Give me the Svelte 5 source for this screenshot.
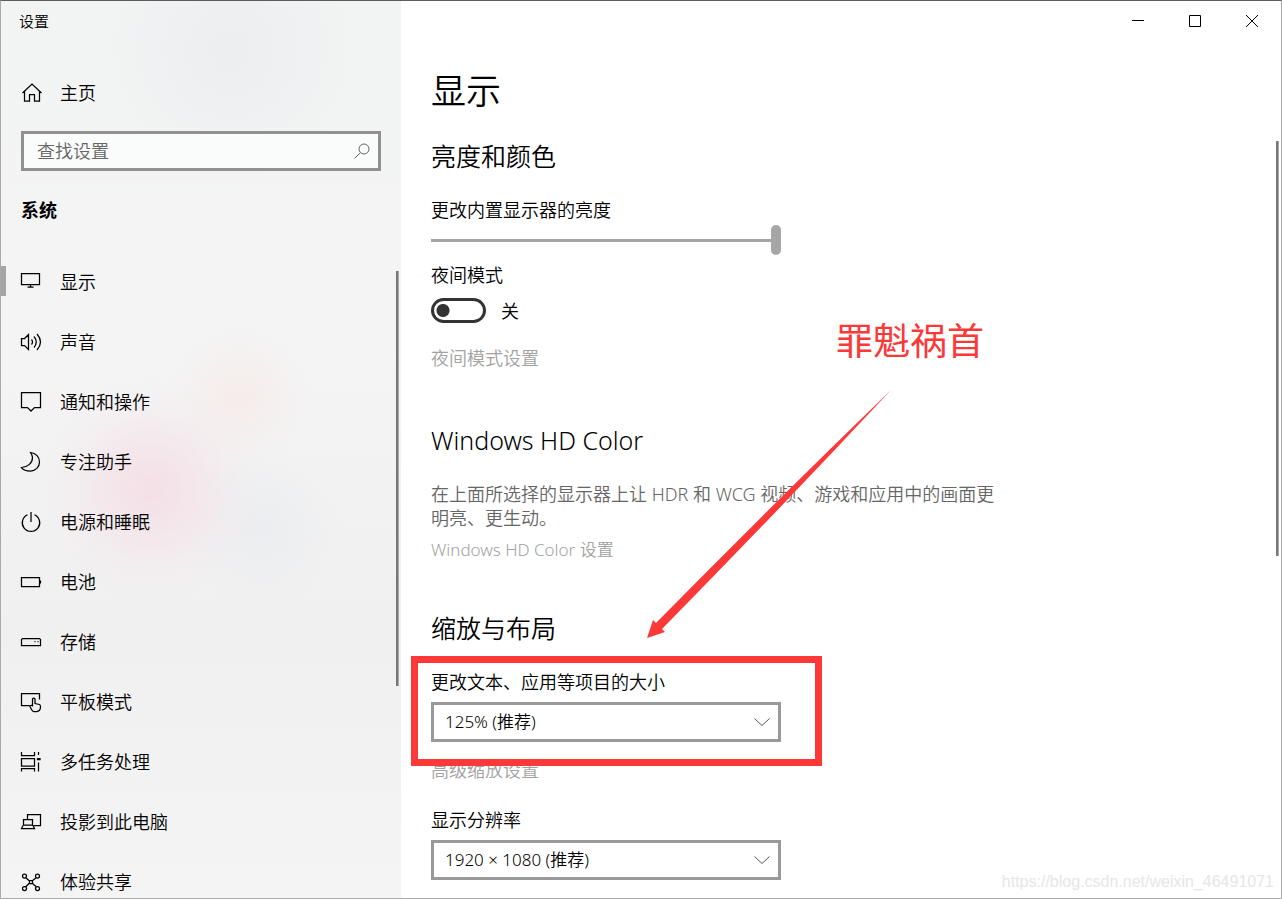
<script lang="ts">
  type NavItem = { label: string; icon: string };

  const items: NavItem[] = [
    { label: "显示", icon: "M1.5 2.5h18v11h-18zM10.5 13.5v2.5M7.5 16h6" },
    {
      label: "声音",
      icon: "M1.5 7.5h3l4-4v15l-4-4h-3zM11.5 8.5q2 2.5 0 5M14 5.5q4.5 5.5 0 11M17 3q7 8 0 16"
    },
    { label: "通知和操作", icon: "M1.5 1.5h19v15h-6l-3.5 3.5-3.5-3.5h-6z" },
    {
      label: "专注助手",
      icon: "M10.5 1.5C16 2 19.5 6 19.5 11C19.5 16 15.5 20 10.5 20C6.5 20 3 18.5 1.5 16.5C8 16 12.5 12 12.5 6.5C12.5 4.5 11.5 3 10.5 1.5z"
    },
    { label: "电源和睡眠", icon: "M11 1v10M7.5 3.8a8.7 8.7 0 1 0 7 0" },
    { label: "电池", icon: "M1.5 6.5h18v9h-18zM20.5 9.5v3" },
    { label: "存储", icon: "M2.5 7.5h17l1 1v6h-19v-6zM14.5 10.5h1M17.5 10.5h1" },
    {
      label: "平板模式",
      icon: "M9.5 14.5h-8v-12h18v6M12.5 15.5v-7.5q1-2 2.5 0v4.5l4.5 1q1 .5 1 2c0 3-1.5 5-4 5h-2.5q-1.5 0-2.5-2l-1.5-3q0-1.5 2.5-1"
    },
    {
      label: "多任务处理",
      icon: "M1.5 1v3.5h13v-3.5M1.5 7.5h13v7.5h-13zM1.5 20.5v-3h13v3M18.5 1v3M18.5 11.5v9M18 8h1M18.5 7v2M17.5 7.5h2.5v1h-2.5z"
    },
    {
      label: "投影到此电脑",
      icon: "M7.5 8v-4.5h13v11h-7M3.5 14v-5.5h9v5.5zM3 14.5l-1.5 3h13l-1.5-3"
    },
    {
      label: "体验共享",
      icon: "M5.5 6.5l4 3.5M12 10l4.5-3.5M5.5 16l4-4M12 12l4.5 4M9.5 9.5h3v3h-3zM2.5 5a2 2 0 1 0 4 0a2 2 0 1 0-4 0M15.5 5a2 2 0 1 0 4 0a2 2 0 1 0-4 0M2.5 17.5a2 2 0 1 0 4 0a2 2 0 1 0-4 0M15.5 17.5a2 2 0 1 0 4 0a2 2 0 1 0-4 0"
    }
  ];

  let selected = $state("显示");
  let nightMode = $state(false);
  let scale = $state("125% (推荐)");
  let resolution = $state("1920 × 1080 (推荐)");
</script>

<div class="window">
  <aside class="sidebar">
    <div class="app-title">设置</div>
    <a class="nav-link home" href="#home">
      <svg class="icon" viewBox="0 0 22 22"><path d="M2.5 11L12 2l9.5 9M4.5 9.5v9.5h5v-6.5h5v6.5h5v-9.5" /></svg>
      主页
    </a>
    <div class="search">
      <input class="search-input" type="search" placeholder="查找设置" aria-label="查找设置" />
      <svg class="search-icon" viewBox="0 0 16 16"><circle cx="10" cy="6" r="5" /><path d="M6.5 9.5L.5 15.5" /></svg>
    </div>
    <h2 class="group">系统</h2>
    <nav class="nav">
      {#each items as item}
        <a
          class="nav-link"
          class:active={selected === item.label}
          href="#{item.label}"
          onclick={() => (selected = item.label)}
        >
          <svg class="icon" viewBox="0 0 22 22"><path d={item.icon} /></svg>
          {item.label}
        </a>
      {/each}
    </nav>
    <div class="scrollbar side-scroll"></div>
  </aside>

  <main class="main">
    <div class="caption">
      <button class="caption-button" aria-label="最小化">
        <svg viewBox="0 0 12 12"><path d="M0 5.5h12" /></svg>
      </button>
      <button class="caption-button" aria-label="最大化">
        <svg viewBox="0 0 12 12"><path d="M.5 .5h11v11h-11z" /></svg>
      </button>
      <button class="caption-button" aria-label="关闭">
        <svg viewBox="0 0 12 12"><path d="M0 0l12 12M12 0l-12 12" /></svg>
      </button>
    </div>

    <div class="content">
      <h1>显示</h1>

      <section>
        <h2>亮度和颜色</h2>
        <label class="label" for="brightness">更改内置显示器的亮度</label>
        <input id="brightness" class="slider" type="range" min="0" max="100" value="100" disabled />
        <div class="label">夜间模式</div>
        <label class="toggle-row">
          <input class="toggle" type="checkbox" role="switch" bind:checked={nightMode} />
          {nightMode ? "开" : "关"}
        </label>
        <a class="link night-link" href="#night">夜间模式设置</a>
      </section>

      <section>
        <h2>Windows HD Color</h2>
        <p class="description">在上面所选择的显示器上让 HDR 和 WCG 视频、游戏和应用中的画面更明亮、更生动。</p>
        <a class="link color-link" href="#hdcolor">Windows HD Color 设置</a>
      </section>

      <section>
        <h2>缩放与布局</h2>
        <div class="field marked">
          <label class="label" for="scale">更改文本、应用等项目的大小</label>
          <div class="select">
            <select id="scale" bind:value={scale}>
              <option>100%</option>
              <option>125% (推荐)</option>
              <option>150%</option>
            </select>
            <svg class="chevron" viewBox="0 0 16 8"><path d="M.5 .5l7.5 7 7.5-7" /></svg>
          </div>
          <svg class="arrow" viewBox="0 0 244 248">
            <path d="M0 248L6 230L9 233Q130 110 244 0Q134 118 15 239L18 242z" />
          </svg>
          <div class="note">罪魁祸首</div>
        </div>
        <a class="link scale-link" href="#scaling">高级缩放设置</a>
        <div class="field">
          <label class="label" for="resolution">显示分辨率</label>
          <div class="select">
            <select id="resolution" bind:value={resolution}>
              <option>1920 × 1080 (推荐)</option>
              <option>1600 × 900</option>
              <option>1280 × 720</option>
            </select>
            <svg class="chevron" viewBox="0 0 16 8"><path d="M.5 .5l7.5 7 7.5-7" /></svg>
          </div>
        </div>
      </section>
    </div>
    <div class="scrollbar main-scroll"></div>
    <div class="watermark">https://blog.csdn.net/weixin_46491071</div>
  </main>
</div>

<style>
  :global(body) {
    margin: 0;
  }

  .window {
    display: grid;
    grid-template-columns: 400px 1fr;
    box-sizing: border-box;
    height: 100vh;
    overflow: hidden;
    border: 1px solid #aaa;
    border-top-color: #5c5c5c;
    background: #fff;
    color: #000;
    font-family: "Noto Sans", "Noto Sans CJK SC", sans-serif;
    font-size: 18px;
    font-weight: 350;
    line-height: 24px;
  }

  .sidebar {
    position: relative;
    min-height: 0;
    overflow: hidden;
    background:
      radial-gradient(circle at 150px 488px, rgba(245, 205, 218, 0.5) 0, rgba(246, 215, 225, 0.4) 45px, rgba(246, 225, 232, 0.2) 80px, transparent 110px),
      radial-gradient(circle at 238px 395px, rgba(250, 222, 218, 0.35) 0, transparent 70px),
      radial-gradient(circle at 260px 525px, rgba(226, 230, 238, 0.4) 0, transparent 80px),
      radial-gradient(circle at 230px 50px, rgba(232, 234, 238, 0.6) 0, transparent 130px),
      linear-gradient(#f2f3f3 0%, #f4f4f4 40%, #f0f0f0 70%, #f4f4f4 100%);
  }

  .app-title {
    padding: 8px 18px 0;
    font-size: 15px;
  }

  .nav-link {
    position: relative;
    display: flex;
    align-items: center;
    gap: 18px;
    height: 60px;
    padding: 0 19px;
    color: #000;
    text-decoration: none;
  }

  .home {
    margin-top: 30px;
  }

  .icon {
    flex: none;
    width: 22px;
    height: 22px;
    stroke-width: 1.25;
  }

  svg {
    fill: none;
    stroke: #000;
  }

  .active::before {
    content: "";
    position: absolute;
    top: 14px;
    left: 0;
    width: 5px;
    height: 30px;
    background: #a5a5a5;
  }

  .search {
    position: relative;
    margin: 8px 20px 0;
  }

  .search-input {
    display: block;
    box-sizing: border-box;
    width: 100%;
    height: 40px;
    padding: 0 40px 0 13px;
    border: 3px solid #919191;
    border-radius: 0;
    outline: none;
    background: #fafbfb;
    font: inherit;
    appearance: none;
  }

  .search-input::placeholder {
    color: #666;
  }

  .search-icon {
    position: absolute;
    top: 12px;
    right: 11px;
    width: 16px;
    height: 16px;
    stroke: #666;
  }

  .group {
    margin: 27px 20px 30px;
    font-size: 18px;
    font-weight: 700;
    line-height: 24px;
  }

  .scrollbar {
    position: absolute;
    width: 2px;
    height: 415px;
    border-right: 1px solid #aaa;
    background: #777;
  }

  .side-scroll {
    top: 270px;
    right: 2px;
  }

  .main-scroll {
    top: 140px;
    right: 2px;
  }

  .main {
    position: relative;
    min-width: 0;
    min-height: 0;
    overflow: hidden;
  }

  .caption {
    display: flex;
    justify-content: flex-end;
    padding-right: 1px;
  }

  .caption-button {
    display: grid;
    place-items: center;
    width: 57px;
    height: 40px;
    padding: 0;
    border: none;
    background: transparent;
  }

  .caption-button svg {
    width: 12px;
    height: 12px;
  }

  .content {
    display: flex;
    flex-direction: column;
    padding: 26px 30px 0;
  }

  h1,
  .content h2,
  .description {
    margin: 0;
    font-weight: 350;
  }

  h1 {
    margin-bottom: 25px;
    font-size: 35px;
    line-height: 48px;
  }

  .content h2 {
    margin-bottom: 26px;
    font-size: 25px;
    line-height: 32px;
  }

  section {
    display: flex;
    flex-direction: column;
    align-items: flex-start;
    margin-bottom: 50px;
  }

  .slider {
    width: 350px;
    height: 30px;
    margin: 3px 0 8px;
    background: linear-gradient(#a6a6a6, #a6a6a6) center / 100% 3px no-repeat;
    appearance: none;
  }

  .slider::-webkit-slider-thumb {
    width: 10px;
    height: 30px;
    border-radius: 5px;
    background: #a6a6a6;
    appearance: none;
  }

  .toggle-row {
    display: flex;
    align-items: center;
    gap: 15px;
    height: 25px;
    margin: 11px 0 23px;
  }

  .toggle {
    box-sizing: border-box;
    width: 55px;
    height: 25px;
    margin: 0;
    border: 3px solid #333;
    border-radius: 13px;
    background: radial-gradient(circle at 9px 50%, #333 6px, transparent 7px);
    appearance: none;
  }

  .toggle:checked {
    background: radial-gradient(circle at 40px 50%, #333 6px, transparent 7px);
  }

  .link {
    color: #a2a2a2;
    text-decoration: none;
  }

  .night-link {
    margin-bottom: 4px;
  }

  .color-link {
    font-size: 17px;
  }

  .description {
    max-width: 572px;
    margin-bottom: 8px;
    color: #666;
  }

  .field {
    position: relative;
    display: flex;
    flex-direction: column;
    gap: 8px;
  }

  .select {
    position: relative;
    width: 350px;
  }

  select {
    display: block;
    box-sizing: border-box;
    width: 100%;
    height: 40px;
    padding: 0 40px 0 11px;
    border: 3px solid #999;
    border-radius: 0;
    background: #fff;
    color: #000;
    font: inherit;
    font-size: 17px;
    appearance: none;
  }

  .chevron {
    position: absolute;
    top: 16px;
    right: 11px;
    width: 16px;
    height: 8px;
    stroke: #555;
    pointer-events: none;
  }

  .marked::after {
    content: "";
    position: absolute;
    z-index: 1;
    top: -14px;
    left: -20px;
    width: 397px;
    height: 96px;
    border: 7px solid #fc3838;
    pointer-events: none;
  }

  .arrow {
    position: absolute;
    bottom: 104px;
    left: 216px;
    width: 244px;
    height: 248px;
    fill: #fc3838;
    stroke: none;
    pointer-events: none;
  }

  .note {
    position: absolute;
    bottom: 377px;
    left: 405px;
    color: #fc3838;
    font-size: 37px;
    font-weight: 400;
    line-height: 48px;
    white-space: nowrap;
  }

  .scale-link {
    margin: 16px 0 26px;
  }

  .watermark {
    position: absolute;
    right: 7px;
    bottom: 4px;
    color: #e6e6e6;
    font-family: "Liberation Sans", sans-serif;
    font-size: 16px;
    font-weight: 400;
  }
</style>
